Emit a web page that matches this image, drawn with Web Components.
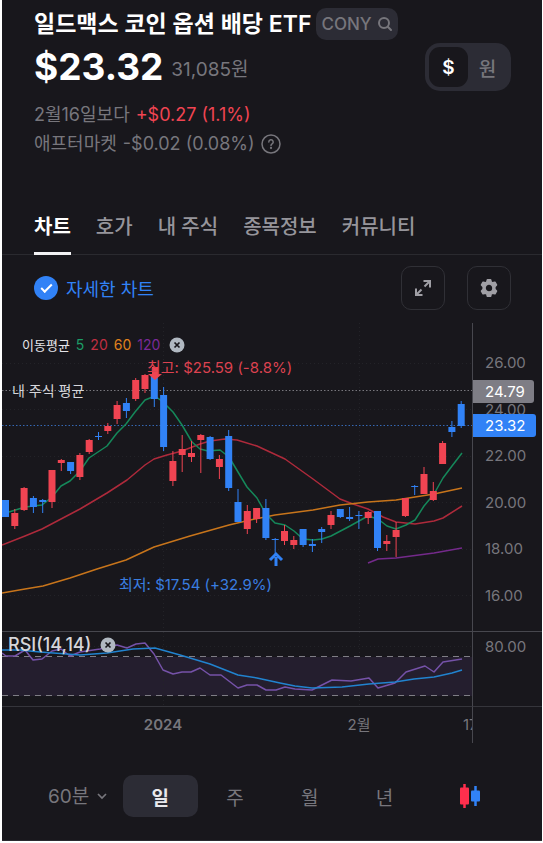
<!DOCTYPE html>
<html lang="ko">
<head>
<meta charset="utf-8">
<meta name="viewport" content="width=device-width, initial-scale=1">
<title>일드맥스 코인 옵션 배당 ETF</title>
<style>
  :root {
    --bg: #18171c;
    --chip: #2c2c35;
    --muted: #77767c;
    --line: #2a2a2f;
    --red: #f04452;
    --blue: #3182f6;
  }
  body {
    margin: 0;
    background: #fff;
    font-family: Inter, "Noto Sans CJK KR", sans-serif;
    color: #fff;
  }
</style>
</head>
<body>
<stock-page>
  <stock-header ticker="CONY" price="$23.32" local="31,085원">
    일드맥스 코인 옵션 배당 ETF
    <currency-toggle slot="action"></currency-toggle>
    <change-line slot="changes" label="2월16일보다" tone="up">+$0.27 (1.1%)</change-line>
    <change-line slot="changes" label="애프터마켓" help>-$0.02 (0.08%)</change-line>
  </stock-header>
  <tab-bar>
    <tab-item active>차트</tab-item>
    <tab-item>호가</tab-item>
    <tab-item>내 주식</tab-item>
    <tab-item>종목정보</tab-item>
    <tab-item>커뮤니티</tab-item>
  </tab-bar>
  <chart-toolbar>자세한 차트</chart-toolbar>
  <price-chart></price-chart>
  <period-bar></period-bar>
</stock-page>

<script>
class StockPage extends HTMLElement {
  constructor() {
    super();
    this.attachShadow({ mode: 'open' });
  }

  connectedCallback() {
    this.shadowRoot.innerHTML = `
      <style>
        :host { display: block; }
        main {
          margin: 0 1px 0 2px;
          padding: 8px 0 23px;
          border-bottom: 1px solid var(--line);
          background: var(--bg);
          overflow: hidden;
        }
      </style>
      <main><slot></slot></main>
    `;
  }
}

class StockHeader extends HTMLElement {
  constructor() {
    super();
    this.attachShadow({ mode: 'open' });
  }

  connectedCallback() {
    const ticker = this.getAttribute('ticker') || '';
    const price = this.getAttribute('price') || '$0.00';
    const local = this.getAttribute('local') || '0원';

    this.shadowRoot.innerHTML = `
      <style>
        :host { display: block; padding: 0 31px 0 32px; }
        .title, .price {
          display: flex;
          align-items: center;
        }
        .title { gap: 5px; height: 32px; }
        h1 {
          margin: 0;
          font-size: 23px;
          line-height: 32px;
          font-weight: 600;
          white-space: nowrap;
        }
        .ticker {
          display: flex;
          align-items: center;
          gap: 5px;
          height: 32px;
          padding: 0 5px;
          border: 0;
          border-radius: 10px;
          background: var(--chip);
          color: var(--muted);
          font: 500 17px Inter, sans-serif;
        }
        .price { margin-top: 3px; height: 48px; gap: 8px; }
        .now { font-size: 37px; line-height: 44px; font-weight: 700; }
        .local { flex: 1; font-size: 19px; color: var(--muted); }
        .changes { margin-top: 9px; }
      </style>
      <div class="title">
        <h1><slot></slot></h1>
        <button class="ticker" type="button">${ticker}
          <svg width="16" height="16" viewBox="0 0 16 16" fill="none" stroke="currentColor" stroke-width="2" stroke-linecap="round"><circle cx="7" cy="7" r="5"/><path d="M10.800 10.800L14 14"/></svg>
        </button>
      </div>
      <div class="price">
        <span class="now">${price}</span>
        <span class="local">${local}</span>
        <slot name="action"></slot>
      </div>
      <div class="changes"><slot name="changes"></slot></div>
    `;
  }
}

class CurrencyToggle extends HTMLElement {
  constructor() {
    super();
    this.attachShadow({ mode: 'open' });
  }

  connectedCallback() {
    this.shadowRoot.innerHTML = `
      <style>
        :host {
          display: flex;
          padding: 4px;
          border-radius: 15px;
          background: var(--chip);
        }
        button {
          width: 39px;
          height: 40px;
          padding: 0;
          border: 0;
          border-radius: 11px;
          background: none;
          color: var(--muted);
          font: 500 19px Inter, "Noto Sans CJK KR", sans-serif;
        }
        button[aria-pressed="true"] {
          background: var(--bg);
          color: #fff;
          font-weight: 600;
        }
      </style>
      <button type="button" aria-pressed="true">$</button>
      <button type="button" aria-pressed="false">원</button>
    `;
    const buttons = this.shadowRoot.querySelectorAll('button');
    buttons.forEach(b => b.addEventListener('click', () => {
      buttons.forEach(o => o.setAttribute('aria-pressed', o === b));
    }));
  }
}

class ChangeLine extends HTMLElement {
  constructor() {
    super();
    this.attachShadow({ mode: 'open' });
  }

  connectedCallback() {
    const label = this.getAttribute('label') || '';
    const help = this.hasAttribute('help') ? `
      <button type="button" aria-label="도움말">
        <svg width="20" height="20" viewBox="0 0 20 20" fill="none" stroke="currentColor" stroke-width="1.500" stroke-linecap="round"><circle cx="10" cy="10" r="9"/><path d="M7.800 8a2.200 2.200 0 1 1 3.300 1.900c-.8.5-1.100.8-1.100 1.600"/><circle cx="10" cy="14" r=".4"/></svg>
      </button>` : '';

    this.shadowRoot.innerHTML = `
      <style>
        :host {
          display: flex;
          align-items: center;
          gap: 6px;
          height: 29px;
          font-size: 18px;
          line-height: 29px;
          color: var(--muted);
          white-space: nowrap;
        }
        :host([tone="up"]) .value { color: var(--red); }
        button {
          display: flex;
          padding: 0;
          border: 0;
          background: none;
          color: inherit;
        }
      </style>
      <span>${label}</span><span class="value"><slot></slot></span>${help}
    `;
  }
}

class TabBar extends HTMLElement {
  constructor() {
    super();
    this.attachShadow({ mode: 'open' });
  }

  connectedCallback() {
    this.shadowRoot.innerHTML = `
      <style>
        :host { display: block; margin-top: 41px; }
        nav {
          display: flex;
          gap: 25px;
          padding: 0 32px;
          box-shadow: inset 0 -1px var(--line);
        }
      </style>
      <nav><slot></slot></nav>
    `;
  }
}

class TabItem extends HTMLElement {
  constructor() {
    super();
    this.attachShadow({ mode: 'open' });
  }

  connectedCallback() {
    this.shadowRoot.innerHTML = `
      <style>
        :host { display: block; }
        a {
          display: block;
          height: 56px;
          box-sizing: border-box;
          border-bottom: 3px solid transparent;
          color: #96959b;
          font-size: 20px;
          line-height: 56px;
          font-weight: 500;
          text-decoration: none;
          white-space: nowrap;
        }
        :host([active]) a {
          border-color: #f2f2f4;
          color: #fff;
          font-weight: 600;
        }
      </style>
      <a href="#"><slot></slot></a>
    `;
  }
}

class ChartToolbar extends HTMLElement {
  constructor() {
    super();
    this.attachShadow({ mode: 'open' });
  }

  connectedCallback() {
    this.shadowRoot.innerHTML = `
      <style>
        :host {
          display: flex;
          align-items: center;
          gap: 22px;
          padding: 11px 31px 13px 32px;
        }
        label {
          flex: 1;
          display: flex;
          align-items: center;
          gap: 8px;
          color: var(--blue);
          font-size: 18px;
        }
        input {
          appearance: none;
          display: grid;
          place-items: center;
          width: 24px;
          height: 24px;
          margin: 0;
          border-radius: 50%;
          background: var(--chip);
        }
        input:checked { background: var(--blue); }
        input::after {
          content: "";
          width: 9px;
          height: 4px;
          margin-bottom: 3px;
          border: solid #fff;
          border-width: 0 0 2px 2px;
          transform: rotate(-45deg);
        }
        button {
          display: grid;
          place-items: center;
          width: 44px;
          height: 44px;
          padding: 0;
          border: 1px solid #303036;
          border-radius: 10px;
          background: none;
          color: #a09fa5;
        }
      </style>
      <label><input type="checkbox" checked><span><slot></slot></span></label>
      <button type="button" aria-label="크게 보기">
        <svg width="18" height="18" viewBox="0 0 18 18" fill="none" stroke="currentColor" stroke-width="2"><path d="M9.500 2H16v6.500M15.500 2.500l-5 5M8.500 16H2V9.500M2.500 15.500l5-5"/></svg>
      </button>
      <button type="button" aria-label="차트 설정">
        <svg width="20" height="20" viewBox="0 0 22 22"><path fill="currentColor" fill-rule="evenodd" stroke="currentColor" stroke-width="1.800" stroke-linejoin="round" d="M9.300 2h3.400l.7 2.500 1.500.9 2.600-.7 1.700 3-1.800 1.900v2.800l1.800 1.900-1.700 3-2.600-.7-1.500.9-.7 2.500H9.300l-.7-2.500-1.500-.9-2.600.7-1.700-3 1.800-1.900V9.600L2.800 7.700l1.700-3 2.600.7 1.500-.9zM11 6.600a4.400 4.400 0 1 0 0 8.800a4.400 4.400 0 0 0 0-8.800z"/></svg>
      </button>
    `;
  }
}

// x step between candles and the centre of the first one
const STEP = 9.3;
const START = 3.5;

// [high, body top, body bottom, low, up?]
const CANDLES = [
  [177, 177, 194, 194, 0], [186, 190, 203, 206, 1], [164, 165, 187, 188, 1], [173, 175, 184, 190, 0],
  [176, 177, 179, 190, 0], [147, 147, 179, 185, 1], [136, 137, 140, 148, 1], [139, 139, 148, 151, 0],
  [130, 132, 154, 157, 1], [116, 117, 129, 131, 1], [109, 113, 114, 117, 0], [100, 103, 108, 111, 1],
  [78, 82, 96, 101, 1], [75, 80, 88, 95, 0], [55, 57, 76, 78, 1], [51, 52, 66, 70, 1],
  [50, 52, 76, 84, 0], [64, 72, 124, 128, 0], [128, 138, 158, 163, 1], [112, 126, 132, 149, 1],
  [118, 130, 134, 139, 1], [111, 112, 117, 150, 1], [113, 114, 136, 137, 0], [132, 136, 144, 156, 1],
  [107, 113, 165, 168, 0], [166, 179, 199, 199, 0], [182, 188, 206, 211, 1], [185, 185, 196, 200, 1],
  [176, 185, 215, 217, 0], [215, 216, 217, 232, 0], [202, 208, 218, 222, 1], [213, 217, 222, 226, 1],
  [206, 206, 222, 224, 0], [216, 221, 223, 229, 0], [204, 206, 209, 220, 0], [188, 192, 202, 206, 1],
  [186, 186, 194, 195, 0], [184, 194, 196, 198, 0], [188, 192, 193, 206, 0], [188, 189, 195, 201, 1],
  [188, 188, 225, 228, 0], [212, 218, 221, 228, 1], [199, 207, 214, 234, 1], [175, 175, 193, 194, 1],
  [162, 163, 164, 172, 0], [144, 151, 171, 171, 1], [159, 168, 177, 178, 1], [118, 120, 141, 141, 1],
  [98, 104, 109, 114, 0], [78, 81, 103, 105, 0]
];

const AVERAGES = [
  ['#ae2a3b', '0,222 23,213 40,206 59,196 78,186 105,170 125,157 143,142 152,136 165,132 180,128 198,121 208,118 223,116 235,117 255,123 283,136 311,156 338,176 351,181 366,186 381,194 394,199 413,201 432,198 441,195 460,183'],
  ['#c8751b', '0,270 23,266 41,263 68,255 95,246 124,237 152,224 188,213 227,202 248,197 273,192 311,187 338,182 366,179 394,177 432,171 460,165'],
  ['#742a8b', '366,240 376,236 394,235 432,230 460,225'],
  ['#15885a', '7,189 23,184 40,182 50,174 59,163 68,158 78,148 87,135 105,123 115,110 124,101 133,89 143,77 153,73 161,79 171,89 180,102 190,119 198,126 206,128 218,127 227,134 245,164 255,175 264,191 273,200 283,202 292,208 301,216 311,217 320,216 329,213 348,203 357,198 366,193 376,196 385,203 394,206 404,202 413,197 422,183 432,171 441,155 450,143 460,130']
];

const RSI = '0,21 4,24 13,24 23,18 31,28 40,27 50,19 59,17 68,24 78,20 98,17 115,13 125,16 134,12 143,11 152,22 161,38 171,42 180,40 189,40 198,36 208,43 219,43 236,56 245,53 255,53 264,58 274,58 283,55 293,57 310,58 330,48 349,49 367,46 376,56 393,51 404,40 423,34 432,40 441,30 460,27';
const RSI_SIGNAL = '0,18 18,18 38,20 78,23 105,21 131,17 153,16 178,23 208,32 236,43 255,46 278,51 293,54 310,56 340,55 367,52 393,50 412,47 432,45 450,41 460,38';

class PriceChart extends HTMLElement {
  constructor() {
    super();
    this.attachShadow({ mode: 'open' });
  }

  drawCandles() {
    return CANDLES.map(([high, top, bottom, low, up], i) => {
      const x = START + i * STEP;
      const color = up ? '#f04452' : '#3182f6';
      return `<path d="M${x} ${high}V${low}" stroke="${color}"/>
        <rect x="${x - 3.5}" y="${top}" width="7" height="${Math.max(bottom - top, 1)}" fill="${color}"/>`;
    }).join('');
  }

  drawAverages() {
    return AVERAGES.map(([color, points]) =>
      `<polyline points="${points}" stroke="${color}" stroke-width="1.500" fill="none" stroke-linejoin="round"/>`
    ).join('');
  }

  connectedCallback() {
    const close = '<svg width="16" height="16" viewBox="0 0 16 16"><circle cx="8" cy="8" r="7.500" fill="#b0b8c1"/><path d="M5.500 5.500l5 5M10.500 5.500l-5 5" stroke="#18171c" stroke-width="1.700"/></svg>';

    this.shadowRoot.innerHTML = `
      <style>
        :host {
          display: grid;
          grid-template-columns: 1fr 69px;
          grid-template-rows: 308px 76px 36px;
        }
        .plot, .rsi { position: relative; overflow: hidden; }
        .plot > svg, .rsi > svg { display: block; width: 100%; height: 100%; }
        .plot, .rsi, .dates { border-right: 1px solid #47474e; }
        .rsi, .rsi-scale { border-top: 1px solid #47474e; border-bottom: 1px solid #35353b; box-sizing: border-box; }
        .legend, .mine, .high, .low, .rsi-title {
          position: absolute;
          display: flex;
          align-items: center;
          line-height: 20px;
          font-size: 14px;
          white-space: nowrap;
        }
        .legend { top: 12px; left: 20px; gap: 6px; color: #e4e4e8; }
        .legend b { font-size: 13px; font-weight: 400; }
        .legend button { margin-left: 3px; }
        .mine { top: 58px; left: 10px; color: #d6d6da; }
        .high, .low { font-size: 15px; }
        .high { top: 35px; left: 145px; color: #dc4250; }
        .low { top: 252px; left: 117px; color: #3a7ee0; }
        .rsi-title { top: 3px; left: 6px; gap: 9px; font-size: 18px; color: #d6d6da; font-weight: 500; }
        button { display: flex; padding: 0; border: 0; background: none; }
        .scale {
          position: relative;
          display: flex;
          flex-direction: column;
          justify-content: space-between;
          padding: 30px 0 25px 12px;
        }
        .scale, .rsi-scale { color: var(--muted); font-size: 15px; line-height: 20px; }
        .rsi-scale { padding: 5px 0 0 12px; }
        .tag {
          position: absolute;
          left: 0;
          width: 61px;
          height: 23px;
          box-sizing: border-box;
          padding-left: 12px;
          border-radius: 0 3px 3px 0;
          color: #fff;
          line-height: 23px;
        }
        .average { top: 57px; background: #7e7d85; }
        .current { top: 91px; width: 63px; background: var(--blue); }
        .dates {
          display: grid;
          grid-template-columns: minmax(0, 322fr) minmax(0, 70fr) minmax(0, 78fr);
          overflow: hidden;
          color: var(--muted);
          font-size: 15px;
          line-height: 36px;
          text-align: center;
          white-space: nowrap;
        }
        .dates b { font-weight: 600; }
        .dates span:last-child { padding-left: 69px; text-align: left; }
      </style>
      <div class="plot">
        <svg viewBox="0 0 470 308" preserveAspectRatio="none">
          <path d="M0 40.500H470M0 86.500H470M0 133.500H470M0 179.500H470M0 226.500H470M0 272.500H470M161.500 0V308M357.500 0V308" stroke="#232328" stroke-dasharray="1 3"/>
          <path d="M0 67.500H470" stroke="#77767c" stroke-dasharray="1.500 2"/>
          <path d="M0 102.500H470" stroke="#3568b4" stroke-dasharray="1.500 2"/>
          ${this.drawAverages()}
          ${this.drawCandles()}
          <path d="M150 44h6v7h4l-7 6-7-6h4z" fill="#f04452"/>
          <path d="M274 243v-9M268 237l6-6 6 6" fill="none" stroke="#3182f6" stroke-width="3"/>
        </svg>
        <div class="legend">
          <b>이동평균</b>
          <span style="color:#1c9c66">5</span><span style="color:#c02f42">20</span><span style="color:#e0821c">60</span><span style="color:#7b2a98">120</span>
          <button type="button" aria-label="이동평균 닫기">${close}</button>
        </div>
        <div class="mine">내 주식 평균</div>
        <div class="high">최고: $25.59 (-8.8%)</div>
        <div class="low">최저: $17.54 (+32.9%)</div>
      </div>
      <div class="scale">
        <span>26.00</span><span>24.00</span><span>22.00</span><span>20.00</span><span>18.00</span><span>16.00</span>
        <span class="tag average">24.79</span>
        <span class="tag current">23.32</span>
      </div>
      <div class="rsi">
        <svg viewBox="0 0 470 74" preserveAspectRatio="none">
          <rect y="25" width="470" height="39" fill="#241e2e"/>
          <path d="M0 14.500H470M161.500 0V74M357.500 0V74" stroke="#232328" stroke-dasharray="1 3"/>
          <path d="M0 24.500H470M0 63.500H470" stroke="#7f7e85" stroke-dasharray="6 5"/>
          <polyline points="${RSI}" fill="none" stroke="#7552a8" stroke-width="1.500" stroke-linejoin="round"/>
          <polyline points="${RSI_SIGNAL}" fill="none" stroke="#2183cf" stroke-width="1.500" stroke-linejoin="round"/>
        </svg>
        <div class="rsi-title">RSI(14,14)<button type="button" aria-label="RSI 닫기">${close}</button></div>
      </div>
      <div class="rsi-scale">80.00</div>
      <div class="dates"><b>2024</b><span>2월</span><span>17</span></div>
    `;
  }
}

class PeriodBar extends HTMLElement {
  constructor() {
    super();
    this.attachShadow({ mode: 'open' });
  }

  connectedCallback() {
    this.shadowRoot.innerHTML = `
      <style>
        :host {
          display: grid;
          grid-template-columns: repeat(5, 1fr) 95px;
          align-items: center;
          margin-top: 32px;
          padding: 0 25px 0 46px;
        }
        select, button {
          height: 42px;
          padding: 0;
          border: 0;
          border-radius: 10px;
          background: none;
          color: var(--muted);
          font: 400 19px Inter, "Noto Sans CJK KR", sans-serif;
        }
        .minutes { display: flex; align-items: center; gap: 7px; color: var(--muted); }
        select { appearance: none; }
        .active { background: var(--chip); color: #e8e8ec; font-weight: 600; }
        .kind { display: grid; place-items: center; }
      </style>
      <label class="minutes">
        <select aria-label="분 단위"><option>60분</option></select>
        <svg width="10" height="8" viewBox="0 0 10 8" fill="none" stroke="currentColor" stroke-width="1.700"><path d="M1 2l4 4 4-4"/></svg>
      </label>
      <button class="active" type="button">일</button>
      <button type="button">주</button>
      <button type="button">월</button>
      <button type="button">년</button>
      <button class="kind" type="button" aria-label="차트 종류">
        <svg width="22" height="26" viewBox="0 0 22 26"><path d="M5.500 1v24" stroke="#ff2f4d" stroke-width="2.500"/><rect x="1" y="4.500" width="9" height="17" rx="1" fill="#ff2f4d"/><path d="M16.500 3v20" stroke="#3182f6" stroke-width="2.500"/><rect x="12" y="7.500" width="9" height="11" rx="1" fill="#3182f6"/></svg>
      </button>
    `;
  }
}

customElements.define('stock-page', StockPage);
customElements.define('stock-header', StockHeader);
customElements.define('currency-toggle', CurrencyToggle);
customElements.define('change-line', ChangeLine);
customElements.define('tab-bar', TabBar);
customElements.define('tab-item', TabItem);
customElements.define('chart-toolbar', ChartToolbar);
customElements.define('price-chart', PriceChart);
customElements.define('period-bar', PeriodBar);
</script>
</body>
</html>
